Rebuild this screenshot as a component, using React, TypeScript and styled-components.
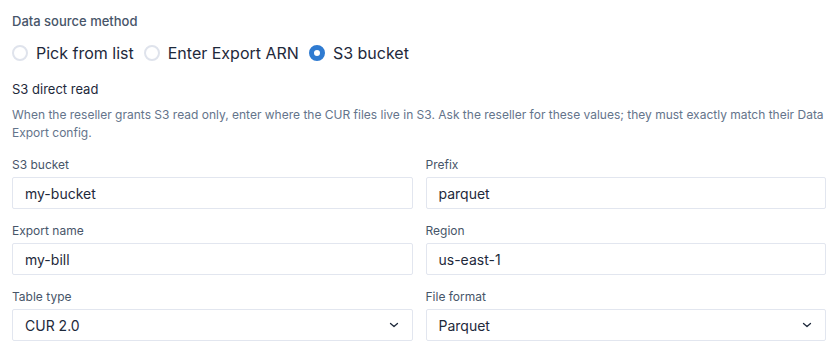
import React from "react";
import styled, { createGlobalStyle } from "styled-components";

const Global = createGlobalStyle`
  html, body { margin: 0; padding: 0; background: #ffffff; }
  body { font-family: Inter, "Noto Sans", sans-serif; -webkit-font-smoothing: antialiased; }
  * { box-sizing: border-box; }
`;

const Page = styled.div`
  padding: 12px 12px 0 12px;
  display: flex;
  flex-direction: column;
`;

const SectionLabel = styled.div`
  font-size: 13px;
  font-weight: 500;
  color: #475569;
  line-height: 18px;
`;

const RadioRow = styled.div`
  display: flex;
  align-items: center;
  gap: 10px;
  margin-top: 12px;
  height: 22px;
`;

const RadioOption = styled.label`
  display: flex;
  align-items: center;
  gap: 8px;
  font-size: 16px;
  color: #1e293b;
  cursor: pointer;
`;

const RadioDot = styled.span<{ $checked?: boolean }>`
  width: 16px;
  height: 16px;
  border-radius: 50%;
  flex: none;
  box-sizing: border-box;
  border: ${(p) => (p.$checked ? "5px solid #2f7bd1" : "2px solid #dfe3ec")};
  background: #ffffff;
`;

const SubTitle = styled.div`
  margin-top: 16px;
  font-size: 13px;
  font-weight: 400;
  color: #1e293b;
  line-height: 18px;
`;

const Description = styled.p`
  margin: 8px 0 0 0;
  font-size: 12px;
  line-height: 18px;
  color: #64748b;
`;

const Grid = styled.div`
  margin-top: 15px;
  display: grid;
  grid-template-columns: 1fr 1fr;
  column-gap: 13px;
  row-gap: 14px;
`;

const Field = styled.div`
  display: flex;
  flex-direction: column;
  gap: 4px;
`;

const FieldLabel = styled.div`
  font-size: 12px;
  line-height: 16px;
  color: #475569;
`;

const Input = styled.div`
  height: 32px;
  border: 1px solid #e2e6ef;
  border-radius: 2px;
  padding: 0 12px;
  display: flex;
  align-items: center;
  justify-content: space-between;
  font-size: 14px;
  color: #1e293b;
`;

const Chevron = () => (
  <svg width="12" height="12" viewBox="0 0 24 24" fill="none" stroke="#1e293b" strokeWidth="2.6" strokeLinecap="round" strokeLinejoin="round">
    <path d="M5 9l7 6 7-6" />
  </svg>
);

const fields: { label: string; value: string; select?: boolean }[] = [
  { label: "S3 bucket", value: "my-bucket" },
  { label: "Prefix", value: "parquet" },
  { label: "Export name", value: "my-bill" },
  { label: "Region", value: "us-east-1" },
  { label: "Table type", value: "CUR 2.0", select: true },
  { label: "File format", value: "Parquet", select: true },
];

export default function App() {
  return (
    <>
      <Global />
      <Page>
        <SectionLabel>Data source method</SectionLabel>
        <RadioRow>
          <RadioOption><RadioDot />Pick from list</RadioOption>
          <RadioOption><RadioDot />Enter Export ARN</RadioOption>
          <RadioOption><RadioDot $checked />S3 bucket</RadioOption>
        </RadioRow>
        <SubTitle>S3 direct read</SubTitle>
        <Description>
          When the reseller grants S3 read only, enter where the CUR files live in S3. Ask the reseller for these values; they must exactly match their Data Export config.
        </Description>
        <Grid>
          {fields.map((f) => (
            <Field key={f.label}>
              <FieldLabel>{f.label}</FieldLabel>
              <Input>
                <span>{f.value}</span>
                {f.select && <Chevron />}
              </Input>
            </Field>
          ))}
        </Grid>
      </Page>
    </>
  );
}
